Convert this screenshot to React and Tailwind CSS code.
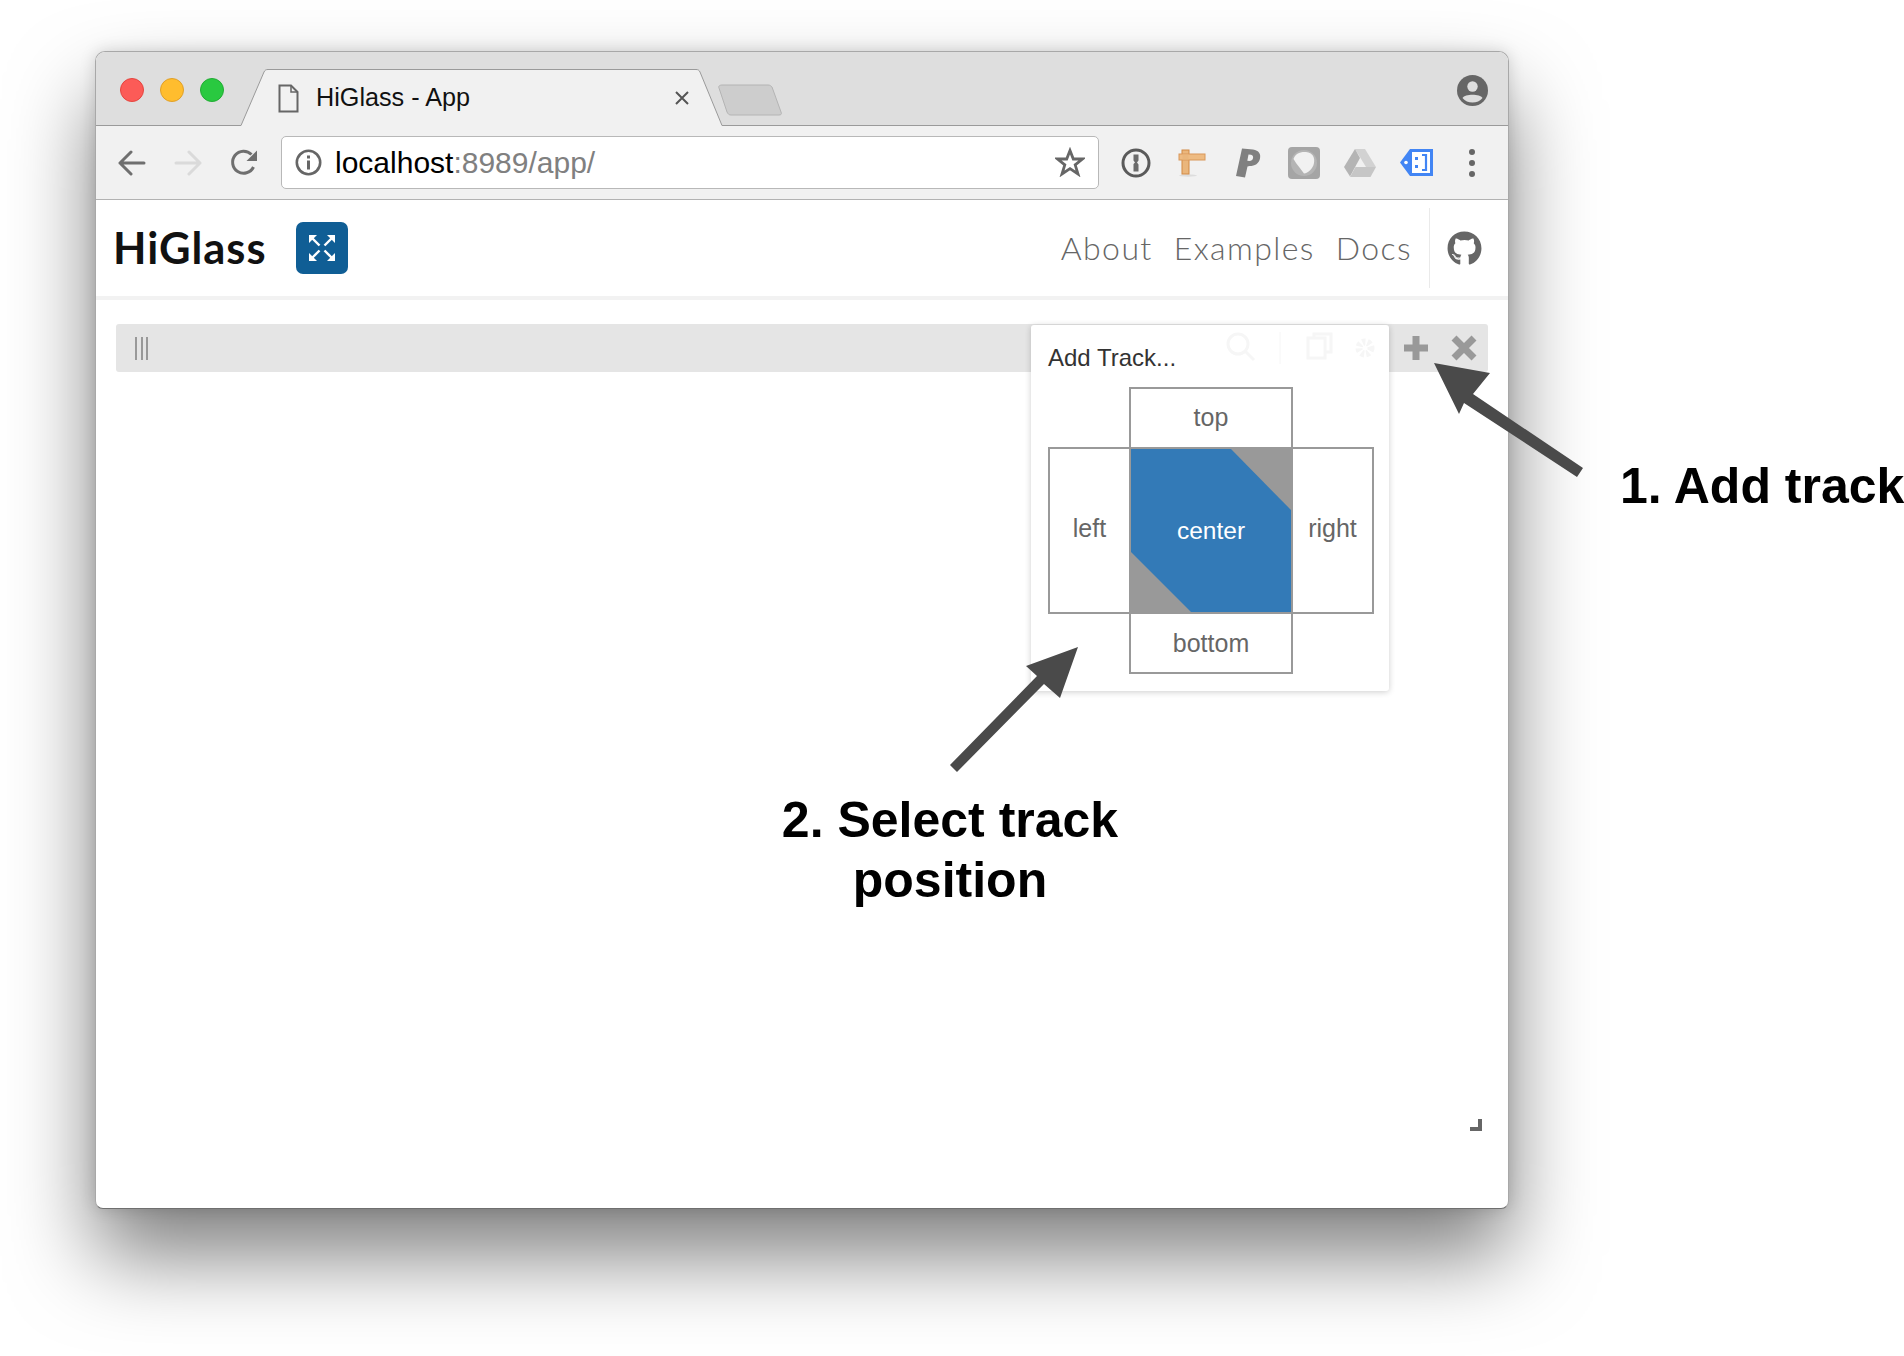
import React from 'react';
import { FaGithub } from 'react-icons/fa';

const Doc = () => (
  <svg width="21" height="29" viewBox="0 0 21 29" fill="none" stroke="#666" strokeWidth="2"><path d="M1.5 1.5H13L19.5 8V27.5H1.5Z" /><path d="M13 1.5V8H19.5" strokeWidth="1.5" /></svg>
);
const Back = ({ c, flip }) => (
  <svg width="28" height="26" viewBox="0 0 28 26" fill="none" stroke={c} strokeWidth="3" strokeLinecap="round" strokeLinejoin="round" style={flip ? { transform: 'scaleX(-1)' } : undefined}><path d="M2 13H26M13 2L2 13L13 24" /></svg>
);
const Reload = () => (
  <svg width="28" height="28" viewBox="0 0 28 28" fill="none"><path d="M23.5 18A11 11 0 1 1 21.5 5.5" stroke="#6f6f6f" strokeWidth="3" /><path d="M27 1.5V12H16.5Z" fill="#6f6f6f" /></svg>
);
const Info = () => (
  <svg width="27" height="27" viewBox="0 0 27 27" fill="none"><circle cx="13.5" cy="13.5" r="11.7" stroke="#666" strokeWidth="2.6" /><rect x="12" y="11.5" width="3" height="9" fill="#666" /><rect x="12" y="6.5" width="3" height="3" fill="#666" /></svg>
);
const Star = () => (
  <svg width="30" height="30" viewBox="0 0 30 30" fill="none"><path d="M15 3.5L18.3 12H27.5L20.2 17.8L23 27L15 21.6L7 27L9.8 17.8L2.5 12H11.7Z" stroke="#666" strokeWidth="2.8" strokeLinejoin="miter" /></svg>
);
const OneP = () => (
  <svg width="30" height="30" viewBox="0 0 30 30" fill="none"><circle cx="15" cy="15" r="13" stroke="#5a5a5a" strokeWidth="3" /><path d="M12.5 6.5H17.5V12.5L16 14.5L17.5 16.5V23.5H12.5V16L14 14.5L12.5 12.5Z" fill="#6b6b6b" /></svg>
);
const Ruler = () => (
  <svg width="28" height="30" viewBox="0 0 28 30"><ellipse cx="10" cy="27.5" rx="9" ry="1.2" fill="#ddd" /><rect x="4" y="2" width="7" height="24" fill="#eab67c" stroke="#d28a45" /><rect x="1" y="6" width="26" height="6" fill="#eebb82" stroke="#d9985a" /><rect x="4.5" y="6.5" width="6" height="5" fill="#eab67c" /></svg>
);
const PP = () => (
  <svg width="26" height="32" viewBox="0 0 26 32"><path d="M7 1.5L18 2.5C24 3.5 26 7 25 11.5C24 16.5 20 19 14.5 19L12.5 19.5L10 30.5L1 29Z" fill="#808080" /><path d="M13.5 7.5L16 7.8C17.8 8 18.4 9.5 18 11.2C17.6 13 16.2 14 14.5 14L12.3 13.7Z" fill="#f1f1f1" /></svg>
);
const Sq = () => (
  <svg width="32" height="32" viewBox="0 0 32 32"><rect width="32" height="32" rx="4" fill="#a5a5a5" /><circle cx="16" cy="16" r="13" fill="#b4b4b4" /><path d="M5.5 12C7 7 12 4.5 18 5C25 5.5 27 11 26 16C25 22 20 26 16 26.5C13 22 9 18 5.5 12Z" fill="#f1f1f1" /></svg>
);
const Drive = () => (
  <svg width="32" height="28" viewBox="0 0 32 28"><path d="M11 0H21L32 18H22Z" fill="#d2d2d2" /><path d="M11 0L16 9L6 27.5L0 18Z" fill="#b4b4b4" /><path d="M11.5 18H32L26.5 28H6Z" fill="#c6c6c6" /></svg>
);
const Tag = () => (
  <svg width="33" height="27" viewBox="0 0 33 27"><path d="M10 0H33V27H10L0 13.5Z" fill="#4285f4" /><rect x="12" y="3" width="18" height="21" fill="#fff" /><circle cx="6" cy="13.5" r="1.8" fill="#fff" /><rect x="15" y="8" width="3" height="3" fill="#4285f4" /><rect x="15" y="16" width="3" height="3" fill="#4285f4" /><path d="M22 6H26V21H22" fill="none" stroke="#4285f4" strokeWidth="2.2" /></svg>
);
const Kebab = () => (
  <div className="flex flex-col gap-[5px]">
    <div className="w-[6px] h-[6px] rounded-full bg-[#666]" />
    <div className="w-[6px] h-[6px] rounded-full bg-[#666]" />
    <div className="w-[6px] h-[6px] rounded-full bg-[#666]" />
  </div>
);
const Profile = () => (
  <svg width="31" height="31" viewBox="0 0 31 31"><circle cx="15.5" cy="15.5" r="15.5" fill="#666" /><circle cx="15.5" cy="11.5" r="5.2" fill="#dedede" /><path d="M5.5 23C8 18.8 23 18.8 25.5 23C23 26 19.5 27.5 15.5 27.5C11.5 27.5 8 26 5.5 23Z" fill="#dedede" /></svg>
);
const Expand = () => (
  <svg width="28" height="28" viewBox="0 0 28 28" fill="none" stroke="#fff" strokeWidth="2.4">
    <path d="M11.5 11.5L3 3" /><path d="M16.5 11.5L25 3" /><path d="M11.5 16.5L3 25" /><path d="M16.5 16.5L25 25" />
    <g fill="#fff" stroke="none"><path d="M1 1H9L1 9Z" /><path d="M27 1H19L27 9Z" /><path d="M1 27H9L1 19Z" /><path d="M27 27H19L27 19Z" /></g>
  </svg>
);
const Cell = ({ className, children }) => (
  <div className={`flex items-center justify-center border-[#999] text-[#666] ${className}`}>{children}</div>
);

export default function App() {
  return (
    <div className="relative w-[1904px] h-[1356px] overflow-hidden bg-white pt-[51px] pl-[95px] font-['Liberation_Sans',Arial,sans-serif]">
      <div className="relative flex flex-col w-[1414px] h-[1158px] rounded-t-[10px] rounded-b-[8px] border border-[#a8a8a8] border-b-[#6f6f6f] bg-white shadow-[0_47px_84px_rgba(0,0,0,0.5),0_0_16px_rgba(0,0,0,0.15)]">
        <div className="flex items-end h-[74px] shrink-0 pl-[24px] pr-[20px] bg-[#dedede] border-b border-[#9a9a9a] rounded-t-[9px]">
          <div className="flex gap-[16px] self-start mt-[26px]">
            <div className="w-[24px] h-[24px] rounded-full bg-[#fc5b57] border border-[#e5453f]" />
            <div className="w-[24px] h-[24px] rounded-full bg-[#ffbd2e] border border-[#e0a028]" />
            <div className="w-[24px] h-[24px] rounded-full bg-[#29c940] border border-[#22ac34]" />
          </div>
          <div className="relative ml-[16px] mb-[-1px] w-[484px] h-[57px] flex items-center pl-[38px] pr-[35px]">
            <svg className="absolute left-0 top-0" width="484" height="57" viewBox="0 0 484 57" fill="none">
              <path d="M0 56.5L1 56.5L24 3C25 1 26 .5 28 .5H456C458 .5 459 1 460 3L482 56.5L484 56.5V57H0Z" fill="#f1f1f1" />
              <path d="M0 56.5L1 56.5L24 3C25 1 26 .5 28 .5H456C458 .5 459 1 460 3L482 56.5L484 56.5" stroke="#9a9a9a" />
            </svg>
            <div className="relative mt-[1px]"><Doc /></div>
            <span className="relative ml-[17px] text-[25.2px] leading-none text-[#111]">HiGlass - App</span>
            <svg className="relative ml-auto" width="14" height="14" viewBox="0 0 14 14" stroke="#555" strokeWidth="2"><path d="M1 1L13 13M13 1L1 13" /></svg>
          </div>
          <svg className="relative ml-[-6px] mb-[9px]" width="64" height="32" viewBox="0 0 64 32"><path d="M4 1H50C52 1 53 2 54 3L63 28C64 30 63 31 61 31H13C11 31 10 30 9 28L1 4C0 2 2 1 4 1Z" fill="#cdcdcd" stroke="#b4b4b4" /></svg>
          <div className="ml-auto self-start mt-[23px]"><Profile /></div>
        </div>

        <div className="flex items-center h-[74px] shrink-0 pl-[8px] bg-[#f1f1f1] border-b border-[#b2b2b2]">
          <div className="flex items-center justify-center w-[56px]"><Back c="#6f6f6f" /></div>
          <div className="flex items-center justify-center w-[56px]"><Back c="#dadada" flip /></div>
          <div className="flex items-center justify-center w-[56px]"><Reload /></div>
          <div className="flex items-center ml-[9px] mb-[1px] w-[818px] h-[53px] pl-[13px] pr-[13px] bg-white border border-[#b8b8b8] rounded-[5px]">
            <Info />
            <span className="ml-[13px] mt-[2px] text-[30px] leading-none text-black">localhost<span className="text-[#808080]">:8989/app/</span></span>
            <div className="ml-auto"><Star /></div>
          </div>
          <div className="flex ml-[9px]">
            <div className="flex items-center justify-center w-[56px] h-[34px]"><OneP /></div>
            <div className="flex items-center justify-center w-[56px] h-[34px]"><Ruler /></div>
            <div className="flex items-center justify-center w-[56px] h-[34px]"><PP /></div>
            <div className="flex items-center justify-center w-[56px] h-[34px]"><Sq /></div>
            <div className="flex items-center justify-center w-[56px] h-[34px]"><Drive /></div>
            <div className="flex items-center justify-center w-[56px] h-[34px]"><Tag /></div>
            <div className="flex items-center justify-center w-[56px] h-[34px]"><Kebab /></div>
          </div>
        </div>

        <div className="flex items-center h-[100px] shrink-0 pl-[17px] pr-[26px] border-b-[4px] border-[#f2f2f2]">
          <span className="w-[183px] font-['Lato',sans-serif] font-bold text-[43.5px] tracking-[1px] leading-none text-[#111]">HiGlass</span>
          <div className="flex items-center justify-center w-[52px] h-[52px] rounded-[7px] bg-[#105e95]"><Expand /></div>
          <nav className="ml-auto flex gap-[21px] font-['Lato',sans-serif] font-light text-[32px] tracking-[1.4px] leading-none text-[#666]">
            <span>About</span><span>Examples</span><span>Docs</span>
          </nav>
          <div className="ml-[17px] w-[1px] h-[80px] bg-[#eaeaea]" />
          <div className="ml-[17px] mt-[1px] text-[#666]"><FaGithub size={35} /></div>
        </div>

        <div className="relative flex-1">
          <div className="flex items-center mt-[24px] ml-[20px] mr-[20px] h-[48px] pl-[19px] pr-[11px] rounded-[3px] bg-[#e5e5e5]">
            <div className="flex gap-[3.5px]">
              <div className="w-[2px] h-[23px] bg-[#999]" />
              <div className="w-[2px] h-[23px] bg-[#999]" />
              <div className="w-[2px] h-[23px] bg-[#999]" />
            </div>
            <svg className="ml-auto mr-[23px]" width="24" height="24" viewBox="0 0 24 24" fill="#999"><path d="M8.5 0H15.5V8.5H24V15.5H15.5V24H8.5V15.5H0V8.5H8.5Z" /></svg>
            <svg width="26" height="26" viewBox="0 0 26 26" stroke="#999" strokeWidth="7"><path d="M3 3L23 23M23 3L3 23" /></svg>
          </div>

          <div className="absolute left-[935px] top-[25px] w-[358px] h-[366px] pt-[17px] pl-[17px] rounded-[3px] bg-white shadow-[0_1px_6px_rgba(0,0,0,0.2)]">
            <div className="flex items-center h-[45px] pb-[14px] text-[24px] leading-none text-[#333]">Add Track...</div>
            <div className="grid grid-cols-[81px_164px_81px] grid-rows-[60px_167px_60px] text-[25px] leading-none">
              <div />
              <Cell className="border-2 border-b-0 pb-[2px]">top</Cell>
              <div />
              <Cell className="border-2 border-r-0 pb-[4px]">left</Cell>
              <div className="relative flex items-center justify-center border-2 border-[#999] bg-[#337ab7]">
                <svg className="absolute inset-0" width="160" height="163" viewBox="0 0 160 163" fill="#999"><path d="M100 0H160V61Z" /><path d="M0 103V163H60Z" /></svg>
                <span className="relative mt-[1px] text-white text-[24.5px]">center</span>
              </div>
              <Cell className="border-2 border-l-0 pb-[4px]">right</Cell>
              <div />
              <Cell className="border-2 border-t-0">bottom</Cell>
              <div />
            </div>
            <svg className="absolute left-[160px] top-[7px]" width="190" height="32" viewBox="0 0 190 32" fill="none" stroke="#f6f6f6" strokeWidth="3">
              <circle cx="47" cy="12" r="10" /><path d="M54 19L63 28" />
              <path d="M89 0V32" strokeWidth="1" />
              <rect x="117" y="6" width="17" height="20" /><path d="M123 6V2H140V20H134" />
              <circle cx="174" cy="16" r="6" strokeWidth="7" strokeDasharray="3 2" />
            </svg>
          </div>

          <div className="absolute right-[26px] bottom-[77px] w-[12px] h-[12px]">
            <div className="absolute right-0 bottom-0 w-[4px] h-[12px] bg-[#666]" />
            <div className="absolute right-0 bottom-0 w-[12px] h-[4px] bg-[#666]" />
          </div>
        </div>
      </div>

      <svg className="absolute left-0 top-0 pointer-events-none" width="1904" height="1356" viewBox="0 0 1904 1356" fill="#4a4a4a">
        <path d="M1434 363L1490 373L1473 394L1583 468L1577 477L1464 403L1459 414Z" />
        <path d="M1078 647L1060 698L1044 684L957 772L950 765L1037 676L1026 666Z" />
      </svg>
      <div className="absolute left-[1620px] top-[456px] font-bold text-[50px] leading-[60px] text-black whitespace-nowrap">1. Add track</div>
      <div className="absolute left-[700px] w-[500px] top-[790px] text-center font-bold text-[50px] leading-[60px] text-black">2. Select track<br />position</div>
    </div>
  );
}
